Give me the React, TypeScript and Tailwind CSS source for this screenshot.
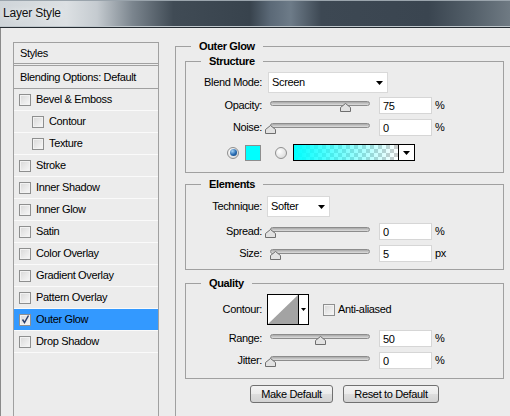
import type { ReactNode } from 'react'

function Caret({ small = false }: { small?: boolean }) {
  return small ? (
    <svg width="5" height="3" viewBox="0 0 5 3" className="block">
      <path d="M0 0H5L2.5 3Z" fill="#000" />
    </svg>
  ) : (
    <svg width="7" height="4" viewBox="0 0 7 4" className="block">
      <path d="M0 0H7L3.5 4Z" fill="#000" />
    </svg>
  )
}

function Checkbox({ checked = false }: { checked?: boolean }) {
  return (
    <span className="flex h-[12px] w-[12px] shrink-0 items-center justify-center border border-[#8e8f8f] bg-[linear-gradient(135deg,#d8d8d8,#f8f8f8)] shadow-[inset_0_0_0_1px_#f2f2f2]">
      {checked && (
        <svg width="9" height="9" viewBox="0 0 9 9" className="block">
          <path d="M1.5 4.5 L3.5 7.5 L7.5 0.5" fill="none" stroke="#2b3f6c" strokeWidth="1.5" />
        </svg>
      )}
    </span>
  )
}

function Radio({ on = false }: { on?: boolean }) {
  return (
    <span className="flex h-[12px] w-[12px] shrink-0 items-center justify-center rounded-full border border-[#8f8f8f] bg-[radial-gradient(circle_at_35%_35%,#ffffff,#d2d2d2)]">
      {on && (
        <span className="h-[7px] w-[7px] rounded-full bg-[radial-gradient(circle_at_35%_30%,#a6d4f7,#2468b0_55%,#0f3d72)]" />
      )}
    </span>
  )
}

function Select({ value, className }: { value: string; className: string }) {
  return (
    <div
      className={
        'flex h-[21px] shrink-0 items-center justify-between border border-[#d9d9d9] bg-white pl-[3px] ' + className
      }
    >
      <span>{value}</span>
      <Caret />
    </div>
  )
}

function Slider({ value }: { value: number }) {
  return (
    <div className="relative ml-[8px] h-[17px] w-[100px] shrink-0">
      <div className="absolute left-0 right-0 top-[4px] h-[5px] rounded-full border border-[#8c8c8c] bg-[linear-gradient(#a8a8a8,#dedede)]" />
      <svg
        width="11"
        height="9"
        viewBox="0 0 11 9"
        className="absolute top-[6px] block"
        style={{ left: `calc(${value}% - 5px)` }}
      >
        <path d="M0.5 8.5 V4.5 L5.5 0.5 L10.5 4.5 V8.5 Z" fill="#e2e2e2" stroke="#6e6e6e" />
      </svg>
    </div>
  )
}

function Field({ value }: { value: string }) {
  return (
    <input
      readOnly
      value={value}
      className="ml-[9px] h-[17px] w-[53px] shrink-0 border border-[#d6d6d6] bg-white pl-[3px] outline-none"
    />
  )
}

function Row({ label, children, className = '' }: { label: string; children: ReactNode; className?: string }) {
  return (
    <div className={'flex items-center ' + className}>
      <span className="w-[76px] shrink-0 text-right">{label}</span>
      {children}
    </div>
  )
}

function SliderRow({ label, value, unit, className = '' }: { label: string; value: number; unit: string; className?: string }) {
  return (
    <Row label={label} className={className}>
      <Slider value={value} />
      <Field value={String(value)} />
      <span className="ml-[3px]">{unit}</span>
    </Row>
  )
}

const styleRows = [
  { name: 'Bevel & Emboss' },
  { name: 'Contour', indent: true },
  { name: 'Texture', indent: true },
  { name: 'Stroke' },
  { name: 'Inner Shadow' },
  { name: 'Inner Glow' },
  { name: 'Satin' },
  { name: 'Color Overlay' },
  { name: 'Gradient Overlay' },
  { name: 'Pattern Overlay' },
  { name: 'Outer Glow', checked: true, active: true },
  { name: 'Drop Shadow' },
]

export default function App() {
  return (
    <div className="h-[416px] w-[510px] overflow-hidden bg-[#ececec] font-['Liberation_Sans',Arial,sans-serif] text-[11px] leading-[13px] tracking-[-0.35px] text-black">
      {/* title bar */}
      <div className="flex h-[28px] items-center border-b border-[#262d33] bg-[linear-gradient(to_right,#cfd5d9_0%,#dce0e3_13%,#c5cbd0_19%,#7b858e_26%,#404b55_34%,#38434d_49%,#5b6977_53%,#6d7b88_57%,#3d4853_63%,#3a4550_84%,#55616b_93%,#6f7a83_100%)] pl-[3px] shadow-[inset_0_-1px_0_#bfc7cc,inset_0_1px_0_#9aa4ac]">
        <span className="text-[12px] tracking-[-0.2px] text-[#111] [text-shadow:0_0_6px_#ffffff]">Layer Style</span>
      </div>

      <div className="flex h-[388px] border-l border-[#8a8a8a]">
        {/* left list */}
        <div className="ml-[12px] mt-[14px] h-[400px] w-[146px] shrink-0 border border-[#a0a0a0]">
          <div className="flex h-[23px] items-center border-b-[3px] border-double border-[#a0a0a0] pl-[6px]">Styles</div>
          <div className="flex h-[23px] items-center border-b border-[#a0a0a0] pl-[6px]">Blending Options: Default</div>
          {styleRows.map((r) => (
            <div
              key={r.name}
              className={
                'flex h-[22px] items-center border-b border-[#fafafa] ' +
                (r.indent ? 'pl-[18px] ' : 'pl-[5px] ') +
                (r.active ? 'bg-[#3399ff]' : '')
              }
            >
              <Checkbox checked={r.checked} />
              <span className="ml-[5px]">{r.name}</span>
            </div>
          ))}
        </div>

        {/* right settings */}
        <div className="ml-[16px] mt-[12px] shrink-0">
          <fieldset className="h-[400px] w-[339px] border border-[#a0a0a0]">
            <legend className="ml-[15px] px-[8px] font-bold">Outer Glow</legend>

            <fieldset className="ml-[9px] mt-[2px] w-[319px] border border-[#a0a0a0]">
              <legend className="ml-[15px] px-[8px] font-bold">Structure</legend>
              <div className="pb-[11px] pt-[4px]">
                <Row label="Blend Mode:">
                  <Select value="Screen" className="ml-[6px] w-[120px] pr-[4px]" />
                </Row>
                <SliderRow label="Opacity:" value={75} unit="%" className="mt-[4px]" />
                <SliderRow label="Noise:" value={0} unit="%" className="mt-[5px]" />
                <div className="mt-[8px] flex h-[17px] items-center">
                  <span className="ml-[41px]">
                    <Radio on />
                  </span>
                  <div className="ml-[6px] h-[16px] w-[16px] border border-[#8d8d8d] bg-[#00ffff]" />
                  <span className="ml-[14px]">
                    <Radio />
                  </span>
                  <div className="ml-[6px] flex h-[17px] w-[122px] border border-black">
                    <div className="flex-1 bg-[linear-gradient(to_right,#00ffff,rgba(0,255,255,0.55)_45%,rgba(0,255,255,0)),repeating-conic-gradient(#cdcdcd_0%_25%,#ffffff_0%_50%)] bg-[length:100%_100%,8px_8px]" />
                    <div className="flex w-[16px] items-center justify-center border-l border-black bg-white">
                      <Caret />
                    </div>
                  </div>
                </div>
              </div>
            </fieldset>

            <fieldset className="ml-[9px] mt-[5px] w-[319px] border border-[#a0a0a0]">
              <legend className="ml-[15px] px-[8px] font-bold">Elements</legend>
              <div className="pb-[7px] pt-[5px]">
                <Row label="Technique:">
                  <Select value="Softer" className="ml-[5px] w-[63px] pr-[4px]" />
                </Row>
                <SliderRow label="Spread:" value={0} unit="%" className="mt-[6px]" />
                <SliderRow label="Size:" value={5} unit="px" className="mt-[5px]" />
              </div>
            </fieldset>

            <fieldset className="ml-[9px] mt-[7px] w-[319px] border border-[#a0a0a0]">
              <legend className="ml-[15px] px-[8px] font-bold">Quality</legend>
              <div className="pb-[9px] pt-[4px]">
                <Row label="Contour:">
                  <div className="ml-[5px] flex h-[31px] w-[42px] shrink-0 border border-black bg-white">
                    <svg width="30" height="29" viewBox="0 0 30 29" className="block">
                      <path d="M0 29 L30 0 L30 29 Z" fill="#a3a3a3" />
                    </svg>
                    <div className="flex flex-1 items-center justify-center border-l border-black">
                      <Caret small />
                    </div>
                  </div>
                  <span className="ml-[14px]">
                    <Checkbox />
                  </span>
                  <span className="ml-[3px]">Anti-aliased</span>
                </Row>
                <SliderRow label="Range:" value={50} unit="%" className="mt-[5px]" />
                <SliderRow label="Jitter:" value={0} unit="%" className="mt-[5px]" />
              </div>
            </fieldset>

            <div className="ml-[9px] mt-[6px] flex w-[319px] justify-center gap-[10px]">
              <button className="h-[18px] w-[83px] rounded-[3px] border border-[#707070] bg-[linear-gradient(#f3f3f3_0%,#ebebeb_50%,#dedede_51%,#d2d2d2_100%)]">
                Make Default
              </button>
              <button className="h-[18px] w-[96px] rounded-[3px] border border-[#707070] bg-[linear-gradient(#f3f3f3_0%,#ebebeb_50%,#dedede_51%,#d2d2d2_100%)]">
                Reset to Default
              </button>
            </div>
          </fieldset>
        </div>
      </div>
    </div>
  )
}
